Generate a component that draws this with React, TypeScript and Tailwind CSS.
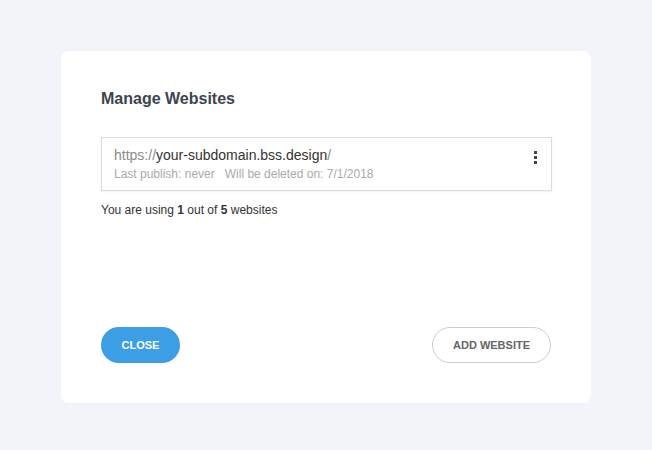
import React from "react";

export default function App() {
  return (
    <div
      className="w-[652px] h-[450px] bg-[#f1f4f8] pt-[51px] pl-[61px]"
      style={{ fontFamily: '"Liberation Sans", Arial, sans-serif' }}
    >
      <div className="w-[530px] h-[352px] bg-white rounded-[8px] flex flex-col pt-[37px] pl-[40px] pr-[39px] pb-[40px]">
        <h1 className="text-[16px] leading-[22px] font-bold text-[#3c4452]">Manage Websites</h1>
        <div className="mt-[27px] h-[54px] border border-[#dcdcdc] shadow-[0_1px_2px_rgba(0,0,0,0.06)] flex items-start justify-between pl-[12px] pr-[12px] pt-[8px]">
          <div className="flex flex-col">
            <div className="text-[14px] leading-[18px] text-[#333]">
              <span className="text-[#8a8a8a]">https://</span>your-subdomain.bss.design<span className="text-[#8a8a8a]">/</span>
            </div>
            <div className="text-[12px] leading-[16px] text-[#aaaaaa] mt-[2px] whitespace-pre">
              {"Last publish: never   Will be deleted on: 7/1/2018"}
            </div>
          </div>
          <div className="flex flex-col gap-[2px] mt-[5px] mr-[2px]">
            <span className="w-[3px] h-[3px] bg-[#444]" />
            <span className="w-[3px] h-[3px] bg-[#444]" />
            <span className="w-[3px] h-[3px] bg-[#444]" />
          </div>
        </div>
        <p className="mt-[11px] text-[12px] leading-[17px] text-[#333]">
          You are using <b>1</b> out of <b>5</b> websites
        </p>
        <div className="mt-auto flex justify-between items-center">
          <button className="w-[79px] h-[36px] rounded-full bg-[#3c9fe6] text-white text-[11px] font-bold">
            CLOSE
          </button>
          <button className="w-[119px] h-[36px] rounded-full border border-[#cccccc] bg-white text-[#666] text-[11px] font-bold mr-[1px]">
            ADD WEBSITE
          </button>
        </div>
      </div>
    </div>
  );
}
